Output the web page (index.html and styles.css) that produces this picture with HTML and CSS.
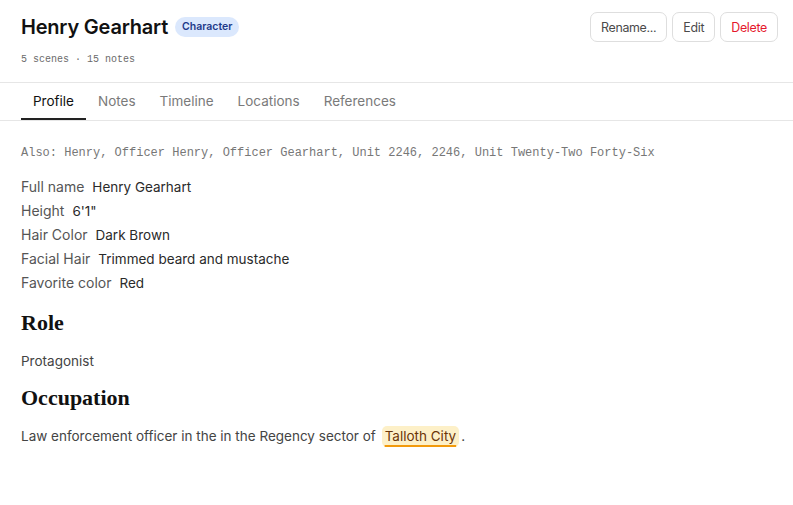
FILE: index.html
```html
<!DOCTYPE html>
<html lang="en">
<head>
<meta charset="utf-8">
<title>Henry Gearhart</title>
<link rel="stylesheet" href="styles.css">
</head>
<body>
<header class="entity-header">
  <div class="entity-heading">
    <div class="title-row">
      <h1 class="entity-name">Henry Gearhart</h1>
      <span class="kind-badge">Character</span>
    </div>
    <div class="entity-meta">5 scenes · 15 notes</div>
  </div>
  <div class="actions">
    <button class="btn">Rename...</button>
    <button class="btn">Edit</button>
    <button class="btn btn-danger">Delete</button>
  </div>
</header>
<nav class="tabs">
  <a class="tab active">Profile</a>
  <a class="tab">Notes</a>
  <a class="tab">Timeline</a>
  <a class="tab">Locations</a>
  <a class="tab">References</a>
</nav>
<main class="profile">
  <p class="aliases">Also: Henry, Officer Henry, Officer Gearhart, Unit 2246, 2246, Unit Twenty-Two Forty-Six</p>
  <dl class="fields">
    <div class="field"><dt>Full name</dt><dd>Henry Gearhart</dd></div>
    <div class="field"><dt>Height</dt><dd>6'1"</dd></div>
    <div class="field"><dt>Hair Color</dt><dd>Dark Brown</dd></div>
    <div class="field"><dt>Facial Hair</dt><dd>Trimmed beard and mustache</dd></div>
    <div class="field"><dt>Favorite color</dt><dd>Red</dd></div>
  </dl>
  <section class="section">
    <h2>Role</h2>
    <p>Protagonist</p>
  </section>
  <section class="section">
    <h2>Occupation</h2>
    <p>Law enforcement officer in the in the Regency sector of <a class="ref-link">Talloth City</a>.</p>
  </section>
</main>
</body>
</html>
```
FILE: styles.css
```css
* { box-sizing: border-box; }

body {
  margin: 0;
  background: #fff;
  color: #1a1a1a;
  font-family: Inter, "Noto Sans", sans-serif;
}

.entity-header {
  display: flex;
  justify-content: space-between;
  align-items: flex-start;
  padding: 12px 15px 0 21px;
  height: 83px;
  border-bottom: 1px solid #e6e6e6;
}

.title-row {
  display: flex;
  align-items: center;
  gap: 7px;
  margin-top: 3px;
}

.entity-name {
  margin: 0;
  font-size: 20px;
  font-weight: 600;
  letter-spacing: -0.2px;
  color: #111;
  line-height: 24px;
}

.kind-badge {
  background: #dbe8fd;
  color: #1e3a8a;
  font-size: 10.5px;
  font-weight: 600;
  padding: 0 7px;
  height: 20px;
  line-height: 20px;
  border-radius: 10px;
}

.entity-meta {
  margin-top: 15px;
  font-family: "Liberation Mono", "DejaVu Sans Mono", monospace;
  font-size: 10px;
  color: #6b6b6b;
}

.actions {
  display: flex;
  gap: 5px;
}

.btn {
  font-family: Inter, "Noto Sans", sans-serif;
  font-size: 12.4px;
  letter-spacing: -0.3px;
  color: #4a4a4a;
  background: #fff;
  border: 1px solid #dedede;
  border-radius: 7px;
  height: 30px;
  padding: 0 10px;
}

.btn-danger { color: #e5172b; }

.tabs {
  display: flex;
  padding: 0 21px;
  border-bottom: 1px solid #e6e6e6;
  height: 38px;
}

.tab {
  padding: 0 12px;
  font-size: 13.5px;
  line-height: 36px;
  color: #7a7a7a;
  border-bottom: 2px solid transparent;
  cursor: pointer;
}

.tab.active {
  color: #111;
  border-bottom-color: #222;
}

.profile {
  padding: 24px 21px;
}

.aliases {
  margin: 0 0 14px;
  font-family: "Liberation Mono", "DejaVu Sans Mono", monospace;
  font-size: 12px;
  color: #777;
  line-height: 16px;
}

.fields { margin: 0; }

.field {
  display: flex;
  gap: 8px;
  font-size: 14px;
  line-height: 24px;
}

.field dt { color: #555; }
.field dd { margin: 0; color: #2a2a2a; font-size: 13.5px; }

.section h2 {
  margin: 14px 0 0;
  font-family: "Liberation Serif", "DejaVu Serif", serif;
  font-size: 22px;
  font-weight: 700;
  color: #111;
  line-height: 28px;
}

.section + .section h2 { margin-top: 11px; }

.section p {
  margin: 12px 0 0;
  font-size: 13.5px;
  line-height: 24px;
  color: #444;
}

.ref-link {
  display: inline-block;
  margin: 0 2px 0 2px;
  padding: 0 3px;
  line-height: 21px;
  background: #fdf0c8;
  color: #6b3508;
  border-radius: 5px;
  text-decoration: underline 2px #f29a0c;
  text-underline-offset: 4px;
}
```
